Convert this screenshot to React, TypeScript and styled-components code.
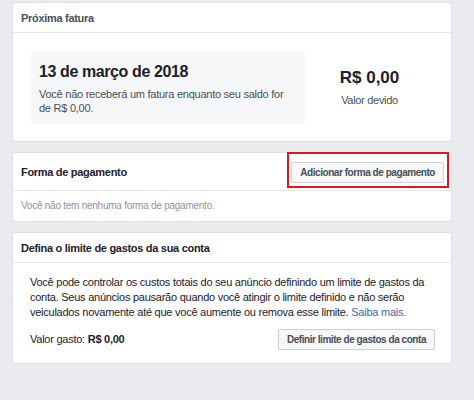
import React from 'react';
import styled, { createGlobalStyle } from 'styled-components';

const GlobalStyle = createGlobalStyle`
    body {
        margin: 0;
        background: #e9ebee;
        font-family: "Liberation Sans", Arial, sans-serif;
        color: #1d2129;
    }
`;

const Page = styled.div`
    display: flex;
    flex-direction: column;
    gap: 10px;
    width: 440px;
    padding: 2px 0 0 12px;
`;

const Card = styled.section`
    background: #fff;
    border: 1px solid #dddfe2;
    border-radius: 3px;
`;

const CardHeader = styled.div<{ tall?: boolean; muted?: boolean }>`
    display: flex;
    align-items: center;
    justify-content: space-between;
    height: ${({ tall }) => (tall ? '37px' : '29px')};
    padding: 0 2px 0 8px;
    border-bottom: 1px solid #e5e5e5;
    font-size: 11px;
    letter-spacing: -0.3px;
    font-weight: bold;
    color: ${({ muted }) => (muted ? '#4b4f56' : '#1d2129')};
`;

const InvoiceBody = styled.div`
    display: flex;
    align-items: center;
    padding: 18px 17px 17px 18px;
`;

const DateBox = styled.div`
    width: 274px;
    height: 73px;
    box-sizing: border-box;
    padding: 10px 8px 0;
    background: #f6f7f9;
    border-radius: 3px;
`;

const DateTitle = styled.div`
    font-size: 16px;
    letter-spacing: -0.4px;
    font-weight: bold;
    line-height: 22px;
    color: #1d2129;
`;

const Note = styled.div`
    margin-top: 4px;
    font-size: 11px;
    letter-spacing: -0.25px;
    line-height: 14px;
    color: #4b4f56;
`;

const Amount = styled.div`
    flex: 1;
    display: flex;
    flex-direction: column;
    align-items: center;
    gap: 6px;
    padding-bottom: 2px;
`;

const AmountValue = styled.div`
    font-size: 17px;
    font-weight: bold;
    color: #1d2129;
`;

const AmountLabel = styled.div`
    font-size: 11px;
    letter-spacing: -0.3px;
    color: #4b4f56;
`;

const Highlight = styled.span`
    align-self: flex-start;
    display: inline-flex;
    margin-top: -1px;
    padding: 8px 3px 3px 2px;
    border: 2px solid #e0161e;
`;

const Button = styled.button`
    height: 21px;
    padding: 0 8px;
    border: 1px solid #ced0d4;
    border-radius: 2px;
    background: #f6f7f9;
    font-family: inherit;
    font-size: 10px;
    letter-spacing: -0.45px;
    font-weight: bold;
    color: #4b4f56;
`;

const EmptyText = styled.div`
    padding: 9px 8px 10px;
    font-size: 10px;
    letter-spacing: -0.25px;
    color: #90949c;
`;

const LimitBody = styled.div`
    padding: 12px 16px 13px 17px;
    font-size: 11px;
    letter-spacing: -0.25px;
    line-height: 15px;
    color: #1d2129;
`;

const Paragraph = styled.p`
    margin: 0 0 9px;
`;

const Link = styled.a`
    color: #4267b2;
    text-decoration: none;
`;

const SpentRow = styled.div`
    display: flex;
    align-items: center;
    justify-content: space-between;
`;

const App = () => {
    return (
        <>
            <GlobalStyle />
            <Page>
                <Card>
                    <CardHeader muted>Próxima fatura</CardHeader>
                    <InvoiceBody>
                        <DateBox>
                            <DateTitle>13 de março de 2018</DateTitle>
                            <Note>
                                Você não receberá um fatura enquanto seu saldo for de R$ 0,00.
                            </Note>
                        </DateBox>
                        <Amount>
                            <AmountValue>R$ 0,00</AmountValue>
                            <AmountLabel>Valor devido</AmountLabel>
                        </Amount>
                    </InvoiceBody>
                </Card>

                <Card>
                    <CardHeader tall>
                        Forma de pagamento
                        <Highlight>
                            <Button>Adicionar forma de pagamento</Button>
                        </Highlight>
                    </CardHeader>
                    <EmptyText>Você não tem nenhuma forma de pagamento.</EmptyText>
                </Card>

                <Card>
                    <CardHeader>Defina o limite de gastos da sua conta</CardHeader>
                    <LimitBody>
                        <Paragraph>
                            Você pode controlar os custos totais do seu anúncio definindo um limite de gastos da
                            conta. Seus anúncios pausarão quando você atingir o limite definido e não serão
                            veiculados novamente até que você aumente ou remova esse limite.{' '}
                            <Link href="#">Saiba mais.</Link>
                        </Paragraph>
                        <SpentRow>
                            <span>
                                Valor gasto: <b>R$ 0,00</b>
                            </span>
                            <Button>Definir limite de gastos da conta</Button>
                        </SpentRow>
                    </LimitBody>
                </Card>
            </Page>
        </>
    );
};

export default App;
